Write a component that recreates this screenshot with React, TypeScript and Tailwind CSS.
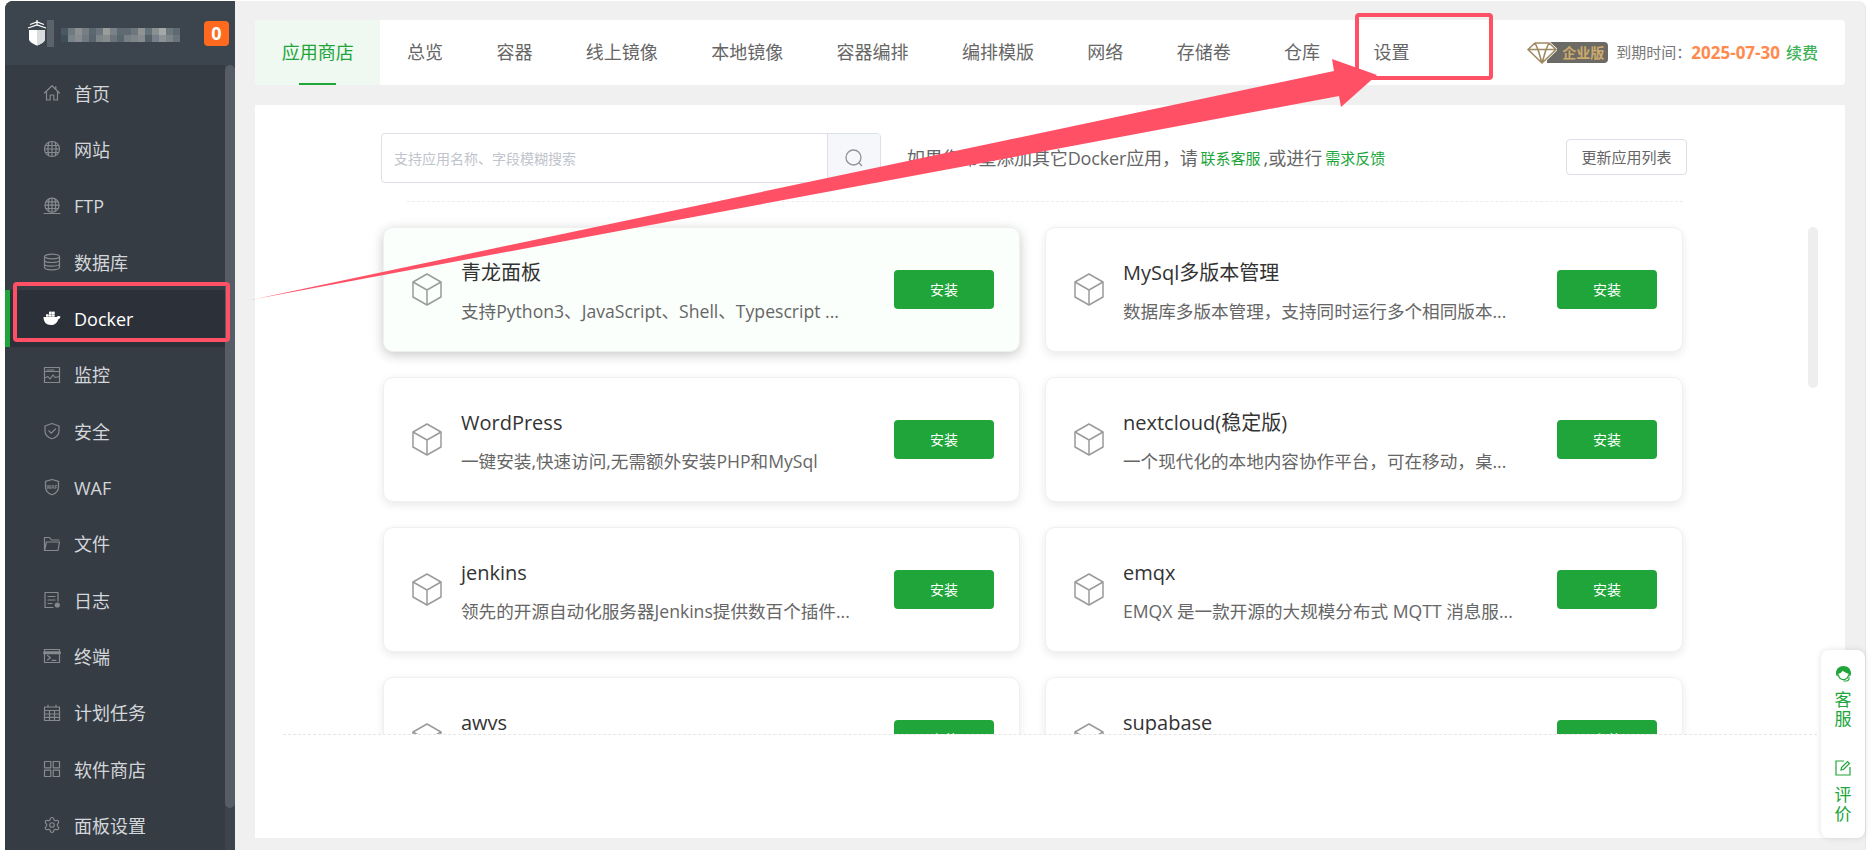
import React from "react";
import { Settings } from "lucide-react";

const S = ({ children, cls = "" }: { children: React.ReactNode; cls?: string }) => (
  <svg viewBox="0 0 18 18" fill="none" stroke="#858a90" strokeWidth="1.2" strokeLinecap="round" strokeLinejoin="round" className={"w-[18px] h-[18px] shrink-0 " + cls}>
    {children}
  </svg>
);

const navItems: { label: string; icon: React.ReactNode; active?: boolean }[] = [
  { label: "首页", icon: <S><path d="M1.500 9 9 1.800 16.500 9M3.500 7.500V16H7.200V11H10.800V16H14.500V7.500M12.800 2.500V5" /></S> },
  { label: "网站", icon: <S><circle cx="9" cy="9" r="7.500" /><path d="M1.500 9H16.500M2.500 5.500H15.500M2.500 12.500H15.500M9 1.500V16.500M5.800 2.300C4.600 6.500 4.600 11.500 5.800 15.700M12.200 2.300C13.400 6.500 13.400 11.500 12.200 15.700" /></S> },
  { label: "FTP", icon: <S><circle cx="9" cy="8.200" r="7" /><path d="M2 8.200H16M3 4.800H15M3 11.500H15M9 1.200V15M6 2C4.900 6 4.900 10.500 6 14.500M12 2C13.100 6 13.100 10.500 12 14.500M1 16.500H17" /></S> },
  { label: "数据库", icon: <S><ellipse cx="9" cy="3.500" rx="7.500" ry="2.300" /><path d="M1.500 3.500V14.500C1.500 15.800 4.900 16.800 9 16.800S16.500 15.800 16.500 14.500V3.500M1.500 7.200C1.500 8.500 4.900 9.500 9 9.500S16.500 8.500 16.500 7.200M1.500 10.900C1.500 12.200 4.900 13.200 9 13.200S16.500 12.200 16.500 10.900" /></S> },
  {
    label: "Docker", active: true,
    icon: (
      <svg viewBox="0 0 18 18" className="w-[18px] h-[18px] shrink-0" fill="#fff">
        <path d="M.5 8H14C14.300 7 15.700 6.500 17.500 7.500 17.300 9 16.300 10 15.300 10.200 14.300 14 11.500 16 8 16 3.200 16 .6 13 .5 8Z" />
        <rect x="3" y="5.300" width="2.700" height="2.400" /><rect x="6" y="5.300" width="2.700" height="2.400" /><rect x="9" y="5.300" width="2.700" height="2.400" /><rect x="6" y="2.600" width="2.700" height="2.400" /><rect x="9" y="2.600" width="2.700" height="2.400" />
      </svg>
    ),
  },
  { label: "监控", icon: <S><rect x="1.500" y="1.500" width="15" height="15" /><path d="M1.500 5.500H16.500M4 4H11M1.500 12 5 10.500 7 13 10 9 12 11.500 16.500 10.500" /></S> },
  { label: "安全", icon: <S><path d="M9 1.500 16 4V9C16 12.800 13 15.600 9 16.800 5 15.600 2 12.800 2 9V4Z" /><path d="M5.800 8.800 8.300 11.200 12.400 7" /></S> },
  {
    label: "WAF",
    icon: (
      <S>
        <path d="M9 1.500 15.500 3.300V9C15.500 12.800 12.800 15.400 9 16.800 5.200 15.400 2.500 12.800 2.500 9V3.300Z" />
        <text x="9" y="10.500" textAnchor="middle" fontSize="5" fontWeight="700" fill="#858a90" stroke="none" fontFamily="Liberation Sans">WAF</text>
      </S>
    ),
  },
  { label: "文件", icon: <S><path d="M1.500 15.500V2.500H6.500L8.500 5H16M1.500 15.500H15L16.500 7H3.500L1.500 15.500Z" /></S> },
  { label: "日志", icon: <S><path d="M10 16.500H2V1.500H15V10M5 5.500H12M5 9H12M5 12.500H9" /><circle cx="14.300" cy="14" r="2" fill="#858a90" /></S> },
  { label: "终端", icon: <S><rect x="1.500" y="2.500" width="15" height="13" /><path d="M1.500 5.700H16.500" strokeWidth="3" /><path d="M4.500 8.500 7.500 10.700 4.500 13M9 13.300H13" /></S> },
  { label: "计划任务", icon: <S><rect x="1.500" y="3" width="15" height="13.500" /><path d="M1.500 6.500H16.500M1.500 10H16.500M1.500 13.300H16.500M6.500 6.500V16.500M11.500 6.500V16.500M5 1.200V3M13 1.200V3" /></S> },
  { label: "软件商店", icon: <S><rect x="1.500" y="1.500" width="6.300" height="6.300" /><rect x="10.200" y="1.500" width="6.300" height="6.300" /><rect x="1.500" y="10.200" width="6.300" height="6.300" /><rect x="10.200" y="10.200" width="6.300" height="6.300" /></S> },
  { label: "面板设置", icon: <Settings size={18} color="#858a90" strokeWidth={1.6} className="shrink-0" /> },
];

const tabs = ["应用商店", "总览", "容器", "线上镜像", "本地镜像", "容器编排", "编排模版", "网络", "存储卷", "仓库", "设置"];

const apps = [
  ["青龙面板", "支持Python3、JavaScript、Shell、Typescript ..."],
  ["MySql多版本管理", "数据库多版本管理\uFF0C支持同时运行多个相同版本..."],
  ["WordPress", "一键安装,快速访问,无需额外安装PHP和MySql"],
  ["nextcloud(稳定版)", "一个现代化的本地内容协作平台\uFF0C可在移动\uFF0C桌..."],
  ["jenkins", "领先的开源自动化服务器Jenkins提供数百个插件..."],
  ["emqx", "EMQX 是一款开源的大规模分布式 MQTT 消息服..."],
  ["awvs", ""],
  ["supabase", ""],
];

const mosaicA = ["#4b5861", "#6f7a80", "#8a9094", "#777f84", "#5c6870", "#6c767c", "#9a9d98", "#7a8288", "#5d6a72", "#5f6a72", "#6e777d", "#8f9392", "#66727a", "#8a8f90", "#a3a8a8", "#6c777e", "#5f6a70"];
const mosaicB = ["#3f4f5a", "#7b8388", "#868c90", "#70797f", "#59646c", "#7d8589", "#878c8c", "#6a747a", "#59656d", "#777f84", "#7f868a", "#868b8e", "#545f67", "#77808a", "#8c9296", "#7d8589", "#68737a"];

const Cube = () => (
  <svg viewBox="0 0 30 33" fill="none" stroke="#9b9b9b" strokeWidth="1.500" strokeLinejoin="round" className="w-[30px] h-[33px] shrink-0">
    <path d="M15 1 29 9V24L15 32 1 24V9Z" />
    <path d="M1 9 15 17 29 9M15 17V32" />
  </svg>
);

export default function App() {
  return (
    <div className="relative flex h-[850px] w-[1873px] overflow-hidden bg-white pl-[5px] pr-[7px] pt-px font-['Open_Sans','Noto_Sans_CJK_SC',sans-serif]">
      {/* sidebar */}
      <aside className="flex h-full w-[230px] shrink-0 flex-col overflow-hidden rounded-tl-lg bg-[#363c44]">
        <div className="flex h-[64px] shrink-0 items-center bg-[#3c444d] pl-[22px]">
          <svg viewBox="0 0 20 26" className="h-[26px] w-[20px] shrink-0">
            <path d="M2 10H18V19C18 22 14 24 10 25.500 6 24 2 22 2 19Z" fill="#fff" />
            <path d="M10 10H18V19C18 22 14 24 10 25.500Z" fill="#d9dbdd" />
            <path d="M1 8 10 5 19 8M3 4.500 10 2 17 4.500M10 0V5" stroke="#fff" strokeWidth="1.200" fill="none" />
          </svg>
          <svg viewBox="0 0 133 28" className="h-[28px] w-[133px] shrink-0">
            <rect x="0" y="1" width="7" height="27" fill="#5a626a" />
            {mosaicA.map((c, i) => <rect key={i} x={14 + i * 7} y="9" width="7" height="7" fill={c} />)}
            {mosaicB.map((c, i) => <rect key={i} x={14 + i * 7} y="16" width="7" height="7" fill={c} />)}
          </svg>
          <div className="ml-[24px] flex h-[25px] w-[25px] shrink-0 items-center justify-center rounded bg-[#ff6a1f] text-[18px] font-bold text-white">0</div>
        </div>
        <div className="flex min-h-0 flex-1">
          <nav className="flex w-[220px] flex-col">
            {navItems.map((n) => (
              <div
                key={n.label}
                className={
                  n.active
                    ? "flex h-[56.33px] shrink-0 items-center gap-[13px] border-l-[5px] border-[#20a53a] bg-[#2c3039] pl-[33px] text-[18px] text-white"
                    : "flex h-[56.33px] shrink-0 items-center gap-[13px] pl-[38px] text-[18px] text-[#d3d6da]"
                }
              >
                {n.icon}
                <span className="pt-[2px]">{n.label}</span>
              </div>
            ))}
          </nav>
          <div className="w-[10px] bg-[#3e444c]">
            <div className="h-[743px] rounded-full bg-[#565d65]" />
          </div>
        </div>
      </aside>

      {/* main */}
      <main className="flex h-full min-w-0 flex-1 flex-col rounded-tr-lg border-r border-[#e8e8e8] bg-[#f0f0f0] pl-[20px] pr-[20px] pt-[19px]">
        <div className="flex h-[65px] shrink-0 items-center rounded bg-white pr-[27px]">
          {tabs.map((t, i) => (
            <div
              key={t}
              className={
                i === 0
                  ? "relative flex h-full items-center rounded-l bg-[#eff9f1] px-[26.7px] text-[18px] text-[#20a53a]"
                  : "flex h-full items-center px-[26.7px] text-[18px] text-[#666]"
              }
            >
              {t}
              {i === 0 && <span className="absolute bottom-0 left-[44px] h-[2px] w-[37px] bg-[#20a53a]" />}
            </div>
          ))}
          <div className="ml-auto flex items-center">
            <svg viewBox="0 0 30 22" className="relative z-10 h-[22px] w-[30px] shrink-0">
              <path d="M8 1H22L29 7.500 15 21 1 7.500Z" fill="#fff" stroke="#fff" strokeWidth="3" />
              <path d="M8 1H22L29 7.500 15 21 1 7.500ZM1 7.500H29M8 1 11 7.500 15 21 19 7.500 22 1" fill="#fff" fillOpacity="0" stroke="#a08a62" strokeWidth="1.600" strokeLinejoin="round" />
            </svg>
            <div className="-ml-[10px] flex h-[21px] w-[61px] items-center rounded-r-sm bg-[#6b6a65] pl-[15px] text-[14px] font-bold text-[#cda96b]">企业版</div>
            <span className="ml-[8px] text-[15px] text-[#777]">{"到期时间\uFF1A"}</span>
            <span className="text-[17px] font-bold text-[#ff8a4f]">2025-07-30</span>
            <span className="ml-[6px] text-[16px] font-medium text-[#3fb25a]">续费</span>
          </div>
        </div>

        <section className="relative mt-[20px] h-[733px] shrink-0 bg-white">
          <div className="mx-[28px] h-[630px] overflow-hidden border-b border-dashed border-[#e6e6e6]">
            <div className="flex items-center pl-[98px] pr-[130px] pt-[28px]">
              <div className="flex h-[50px] w-[500px] shrink-0 overflow-hidden rounded border border-[#dcdfe6]">
                <div className="flex flex-1 items-center pl-[12px] text-[14px] text-[#c0c4cc]">支持应用名称、字段模糊搜索</div>
                <div className="flex w-[53px] items-center justify-center border-l border-[#dcdfe6] bg-[#f5f7fa]">
                  <svg viewBox="0 0 18 18" fill="none" stroke="#909399" strokeWidth="1.300" className="h-[18px] w-[18px]"><circle cx="8.500" cy="8.500" r="7.500" /><path d="M13.800 13.800 17 17" /></svg>
                </div>
              </div>
              <div className="ml-[26px] flex items-center whitespace-nowrap text-[18px] text-[#666]">
                <span className="tracking-[-0.15px]">{"如果您希望添加其它Docker应用\uFF0C请"}</span>
                <span className="ml-[3px] text-[15px] text-[#20a53a]">联系客服</span>
                <span className="ml-[3px]">,或进行</span>
                <span className="ml-[3px] text-[15px] text-[#20a53a]">需求反馈</span>
              </div>
              <div className="mt-[-2px] ml-auto flex h-[36px] w-[121px] shrink-0 items-center justify-center rounded border border-[#dcdfe6] text-[15px] text-[#666]">更新应用列表</div>
            </div>
            <div className="ml-[124px] mr-[134px] mt-[18px] border-t border-dashed border-[#ececec]" />
            <div className="ml-[100px] mt-[25px] grid w-[1300px] grid-cols-[637px_638px] gap-x-[25px] gap-y-[25px]">
              {apps.map(([title, desc], i) => (
                <div
                  key={title}
                  className={
                    i === 0
                      ? "flex h-[125px] items-center rounded-[10px] border border-[#f0f0f0] bg-[#fbfffc] pl-[28px] pr-[25px] shadow-[0_3px_12px_rgba(0,0,0,0.22)]"
                      : "flex h-[125px] items-center rounded-[10px] border border-[#f0f0f0] bg-white pl-[28px] pr-[25px] shadow-[0_3px_10px_rgba(0,0,0,0.09)]"
                  }
                >
                  <Cube />
                  <div className="ml-[19px] min-w-0 flex-1 pt-[4px]">
                    <div className="h-[28px] whitespace-nowrap text-[20px] leading-[28px] text-[#333]">{title}</div>
                    <div className="mt-[10px] h-[28px] whitespace-nowrap text-[17.6px] leading-[28px] text-[#666]">{desc}</div>
                  </div>
                  <div className="flex h-[39px] w-[100px] shrink-0 items-center justify-center rounded bg-[#20a53a] text-[14px] text-white">安装</div>
                </div>
              ))}
            </div>
          </div>
          <div className="absolute left-[1553px] top-[122px] h-[161px] w-[10px] rounded-full bg-[#eeeeee]" />
        </section>
      </main>

      {/* floating service panel */}
      <div className="absolute left-[1821px] top-[650px] flex h-[188px] w-[44px] flex-col items-center rounded-lg bg-white pt-[15px] text-[17px] leading-[19px] text-[#20a53a] shadow-[0_0_6px_rgba(0,0,0,0.12)]">
        <svg viewBox="0 0 18 18" className="h-[17px] w-[17px]">
          <path d="M1 9C1 4 4.500 1 9 1S17 4 17 9C17 11 16 12 15 12V9.500C13 9 10 7.500 8 6 7 8 5 9 3 9.500V12C2 12 1 11 1 9Z" fill="#20a53a" />
          <path d="M3.500 10C4 13.500 6 15.500 9 15.500S14 13.500 14.500 10M9 17H12C14 17 15 15.500 15 13" fill="none" stroke="#20a53a" strokeWidth="1.200" />
        </svg>
        <span className="mt-[8px]">客</span>
        <span>服</span>
        <svg viewBox="0 0 16 16" fill="none" stroke="#20a53a" strokeWidth="1.200" className="mt-[32px] h-[16px] w-[16px]">
          <path d="M9 1H1V15H15V7" />
          <path d="M6 10 6.500 7.500 12.500 1.500 14.500 3.500 8.500 9.500Z" />
        </svg>
        <span className="mt-[9px]">评</span>
        <span>价</span>
      </div>

      {/* annotation overlay */}
      <div className="absolute left-[13px] top-[282px] h-[60px] w-[217px] rounded border-[4px] border-[#ff5066]" />
      <div className="absolute left-[1355px] top-[13px] h-[67px] w-[138px] rounded border-[4px] border-[#ff5066]" />
      <svg className="pointer-events-none absolute left-0 top-0 h-[850px] w-[1873px]" viewBox="0 0 1873 850">
        <polygon points="250,300 1334,71 1332,59 1377,75 1341,107 1339,96" fill="#ff5066" />
      </svg>
    </div>
  );
}
